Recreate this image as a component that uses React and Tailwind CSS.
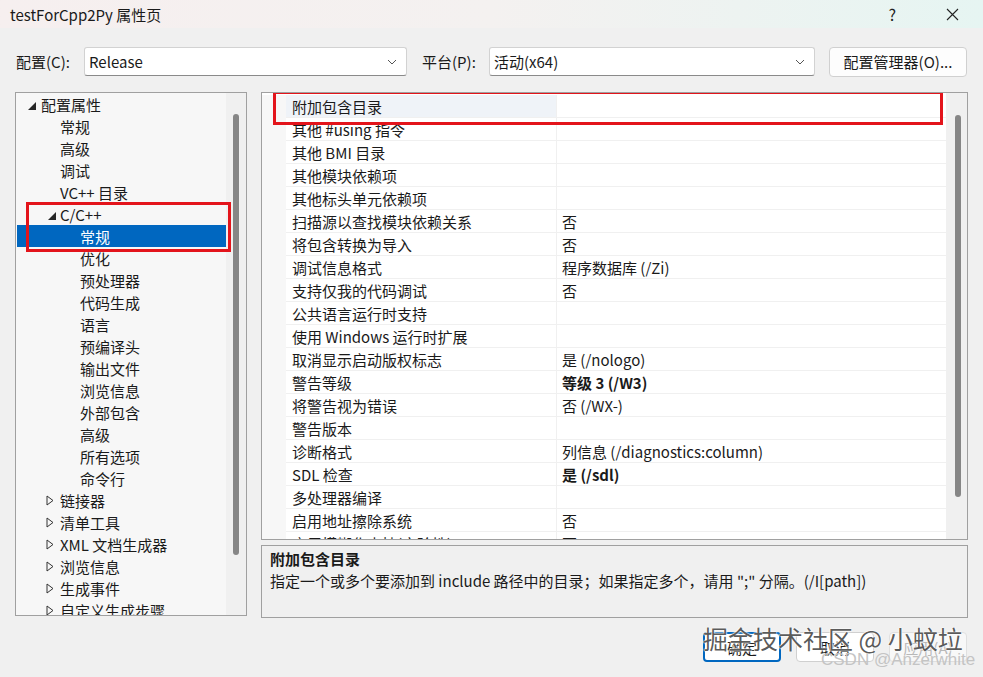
import React from "react";

const tree = [
  { t: "配置属性", lvl: 0, icon: "open" },
  { t: "常规", lvl: 1 },
  { t: "高级", lvl: 1 },
  { t: "调试", lvl: 1 },
  { t: "VC++ 目录", lvl: 1 },
  { t: "C/C++", lvl: 1, icon: "open" },
  { t: "常规", lvl: 2, sel: true },
  { t: "优化", lvl: 2 },
  { t: "预处理器", lvl: 2 },
  { t: "代码生成", lvl: 2 },
  { t: "语言", lvl: 2 },
  { t: "预编译头", lvl: 2 },
  { t: "输出文件", lvl: 2 },
  { t: "浏览信息", lvl: 2 },
  { t: "外部包含", lvl: 2 },
  { t: "高级", lvl: 2 },
  { t: "所有选项", lvl: 2 },
  { t: "命令行", lvl: 2 },
  { t: "链接器", lvl: 1, icon: "closed" },
  { t: "清单工具", lvl: 1, icon: "closed" },
  { t: "XML 文档生成器", lvl: 1, icon: "closed" },
  { t: "浏览信息", lvl: 1, icon: "closed" },
  { t: "生成事件", lvl: 1, icon: "closed" },
  { t: "自定义生成步骤", lvl: 1, icon: "closed" },
];

const props = [
  ["附加包含目录", ""],
  ["其他 #using 指令", ""],
  ["其他 BMI 目录", ""],
  ["其他模块依赖项", ""],
  ["其他标头单元依赖项", ""],
  ["扫描源以查找模块依赖关系", "否"],
  ["将包含转换为导入", "否"],
  ["调试信息格式", "程序数据库 (/Zi)"],
  ["支持仅我的代码调试", "否"],
  ["公共语言运行时支持", ""],
  ["使用 Windows 运行时扩展", ""],
  ["取消显示启动版权标志", "是 (/nologo)"],
  ["警告等级", "等级 3 (/W3)", true],
  ["将警告视为错误", "否 (/WX-)"],
  ["警告版本", ""],
  ["诊断格式", "列信息 (/diagnostics:column)"],
  ["SDL 检查", "是 (/sdl)", true],
  ["多处理器编译", ""],
  ["启用地址擦除系统", "否"],
  ["启用模糊化支持(实验性)", "否"],
];

const Chevron = () => (
  <svg width="10" height="6" viewBox="0 0 10 6" className="shrink-0">
    <path d="M1 1 L5 5 L9 1" fill="none" stroke="#555" strokeWidth="1" />
  </svg>
);

const TreeIcon = ({ kind }) => {
  if (kind === "open")
    return (
      <svg width="8" height="8" viewBox="0 0 8 8" className="mt-[3px]">
        <polygon points="8,0 8,8 0,8" fill="#262626" />
      </svg>
    );
  if (kind === "closed")
    return (
      <svg width="8" height="11" viewBox="0 0 8 11">
        <polygon points="1,1 7,5.5 1,10" fill="none" stroke="#333" strokeWidth="1" />
      </svg>
    );
  return null;
};

const TreeRow = ({ item }) => {
  const spacer = item.lvl === 0 ? "w-[10px]" : item.lvl === 1 ? "w-[29px]" : "w-[49px]";
  const iconBox = item.lvl === 1 && item.icon === "open" ? "pl-[2px]" : item.lvl === 0 ? "pl-[1px]" : "";
  return (
    <div
      className={
        "flex items-center h-[22px] " +
        (item.sel ? "bg-[#0067c0] text-white" : "text-[#1a1a1a]")
      }
    >
      <div className={"shrink-0 " + spacer} />
      <div className={"shrink-0 w-[14px] flex items-center " + iconBox}>
        <TreeIcon kind={item.icon} />
      </div>
      <span className="whitespace-nowrap">{item.t}</span>
    </div>
  );
};

export default function App() {
  return (
    <div className="relative w-[983px] h-[677px] overflow-hidden bg-[#f0f0f0] text-[15px] leading-none text-[#1a1a1a] font-['Noto_Sans_CJK_SC','Noto_Sans',sans-serif]">
      {/* title bar */}
      <div className="h-[28px] flex items-center pl-[10px] bg-gradient-to-r from-[#f6efef] via-[#f4f1f0] to-[#e6f5f2]">
        <span className="text-[15px]">testForCpp2Py 属性页</span>
        <div className="flex-1" />
        <span className="text-[16px] mr-[50px] text-[#222]">?</span>
        <svg width="13" height="13" viewBox="0 0 13 13" className="mr-[24px]">
          <path d="M1 1 L12 12 M12 1 L1 12" stroke="#222" strokeWidth="1.1" />
        </svg>
      </div>

      {/* config row */}
      <div className="mt-[19px] h-[29px] flex items-center pl-[16px]">
        <span className="w-[68px]">配置(C):</span>
        <div className="w-[323px] h-[29px] bg-white border border-[#d2d2d2] border-b-[#8a8a8a] rounded-[3px] flex items-center pl-[4px] pr-[9px]">
          <span className="flex-1">Release</span>
          <Chevron />
        </div>
        <span className="ml-[15px] w-[67px]">平台(P):</span>
        <div className="w-[326px] h-[29px] bg-white border border-[#d2d2d2] border-b-[#8a8a8a] rounded-[3px] flex items-center pl-[4px] pr-[9px]">
          <span className="flex-1">活动(x64)</span>
          <Chevron />
        </div>
        <div className="ml-[14px] w-[138px] h-[30px] bg-[#fdfdfd] border border-[#d0d0d0] rounded-[4px] flex items-center justify-center">
          配置管理器(O)...
        </div>
      </div>

      {/* main panels */}
      <div className="mt-[16px] flex pl-[15px] gap-[14px]">
        {/* tree */}
        <div className="relative w-[232px] h-[524px] border border-[#a0a0a0] bg-[#f7f7f7] flex overflow-hidden">
          <div className="w-[210px] pl-[1px]">
            {tree.map((it, i) => (
              <TreeRow key={i} item={it} />
            ))}
          </div>
          <div className="flex-1 bg-[#f0f0f0] flex justify-center pt-[21px]">
            <div className="w-[6px] h-[441px] bg-[#868686] rounded-[3px]" />
          </div>
          <div className="absolute left-[10px] top-[109px] w-[205px] h-[50px] border-[3px] border-[#e3141b]" />
        </div>

        {/* grid + description */}
        <div className="w-[707px] flex flex-col">
          <div className="relative h-[448px] border border-[#a0a0a0] bg-white flex overflow-hidden">
            <div className="flex-1 pt-[2px]">
              {props.map(([n, v, b], i) => (
                <div key={i} className="flex h-[23px]">
                  <div className="w-[24px] shrink-0 bg-[#f7f7f7]" />
                  <div
                    className={
                      "w-[271px] shrink-0 flex items-center pl-[6px] border-b border-r border-[#f0f0f0] whitespace-nowrap overflow-hidden " +
                      (i === 0 ? "bg-[#eff3f8]" : "")
                    }
                  >
                    {n}
                  </div>
                  <div
                    className={
                      "flex-1 flex items-center pl-[5px] border-b border-[#f0f0f0] whitespace-nowrap " +
                      (b ? "font-bold" : "")
                    }
                  >
                    {v}
                  </div>
                </div>
              ))}
            </div>
            <div className="w-[21px] shrink-0 bg-[#f0f0f0] flex justify-center pt-[22px] pl-[2px]">
              <div className="w-[6px] h-[382px] bg-[#868686] rounded-[3px]" />
            </div>
            <div className="absolute left-[11px] top-[-2px] w-[670px] h-[34px] border-[3px] border-[#e3141b]" />
          </div>
          <div className="mt-[5px] h-[73px] border border-[#a0a0a0] pl-[8px] pt-[1px]">
            <div className="h-[22px] flex items-center font-bold">附加包含目录</div>
            <div className="h-[22px] flex items-center">
              指定一个或多个要添加到 include 路径中的目录；如果指定多个，请用 ";" 分隔。(/I[path])
            </div>
          </div>
        </div>
      </div>

      {/* buttons */}
      <div className="mt-[14px] flex justify-end pr-[16px] gap-[15px]">
        <div className="w-[78px] h-[30px] bg-white border-2 border-[#0067c0] rounded-[4px] flex items-center justify-center">
          确定
        </div>
        <div className="w-[78px] h-[30px] bg-white border border-[#d0d0d0] rounded-[4px] flex items-center justify-center">
          取消
        </div>
        <div className="w-[78px] h-[30px] bg-[#f8f8f8] border border-[#e0e0e0] rounded-[4px] flex items-center justify-center text-[#b8b8b8]">
          应用(A)
        </div>
      </div>

      {/* watermarks */}
      <div className="absolute left-[703px] top-[626px] text-[25px] text-[#2e2e2e]/80 whitespace-nowrap [text-shadow:0_0_2px_#fff,0_0_2px_#fff,0_0_1px_#fff]">
        掘金技术社区 @ 小蚊垃
      </div>
      <div className="absolute left-[821px] top-[651px] text-[17px] text-[#c4c4c4] whitespace-nowrap font-['Liberation_Sans',sans-serif]">
        CSDN @Anzerwhite
      </div>
    </div>
  );
}
